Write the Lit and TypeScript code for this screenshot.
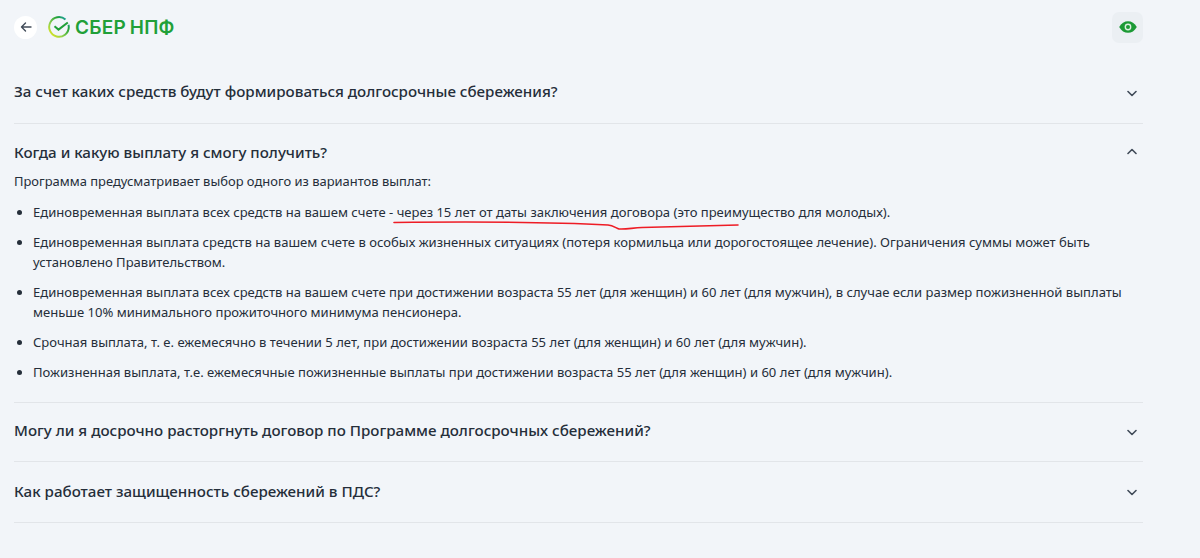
import { LitElement, html, css, svg } from "lit"
import { customElement } from "lit/decorators.js"

const questions = {
  first: "За счет каких средств будут формироваться долгосрочные сбережения?",
  open: "Когда и какую выплату я смогу получить?",
  third: "Могу ли я досрочно расторгнуть договор по Программе долгосрочных сбережений?",
  fourth: "Как работает защищенность сбережений в ПДС?",
}

const chevron = (up: boolean) => html`
  <svg class="chevron" width="10" height="7" viewBox="0 0 10 7">
    <path d=${up ? "M1 5.500 5 1.500l4 4" : "M1 1.500l4 4 4-4"} fill="none" stroke="#414b58" stroke-width="1.600" stroke-linecap="round" stroke-linejoin="round"></path>
  </svg>
`

@customElement("app-root")
export class AppRoot extends LitElement {
  static styles = css`
    :host {
      display: block;
      height: 558px;
      overflow: hidden;
      position: relative;
      background: #f2f5f9;
      color: #252e3a;
      font-family: "Noto Sans", sans-serif;
    }
    .page {
      width: 1129px;
      margin-left: 14px;
    }
    .top {
      display: flex;
      align-items: center;
      height: 54px;
    }
    .back {
      width: 23px;
      height: 23px;
      border-radius: 50%;
      background: #fff;
      display: flex;
      align-items: center;
      justify-content: center;
      margin-right: 11px;
    }
    .brand {
      display: flex;
      align-items: center;
      gap: 5px;
      color: #21a038;
      font-family: "Inter", sans-serif;
      font-size: 19px;
      font-weight: 600;
      letter-spacing: 0.2px;
      word-spacing: -1px;
    }
    .eye {
      margin-left: auto;
      width: 31px;
      height: 31px;
      border-radius: 7px;
      background: #ebeff3;
      display: flex;
      align-items: center;
      justify-content: center;
    }
    .item {
      border-bottom: 1px solid #e2e5e9;
    }
    .head {
      box-sizing: border-box;
      display: flex;
      align-items: center;
      justify-content: space-between;
      height: 59px;
      padding-right: 6px;
      font-size: 15.15px;
      font-weight: 500;
    }
    .item.first .head {
      height: 69px;
      padding-top: 4px;
    }
    .item.first .chevron {
      margin-top: 5px;
    }
    .item.open .head {
      padding-bottom: 4px;
    }
    .item.third .head {
      height: 58px;
      padding-bottom: 4px;
    }
    .item.third .chevron {
      margin-top: 4px;
    }
    .item.fourth .head {
      height: 60px;
      padding-bottom: 3px;
    }
    .item.fourth .chevron {
      margin-top: 3px;
    }
    .body {
      font-size: 12.95px;
      line-height: 20px;
      margin-top: -12px;
      padding-bottom: 10px;
    }
    ul {
      margin: 11px 0 0;
      padding: 0 0 0 19px;
      font-size: 13.05px;
    }
    li {
      margin-bottom: 10px;
    }
    .mark {
      position: absolute;
      left: 380px;
      top: 210px;
      pointer-events: none;
    }
  `

  render() {
    return html`
      <div class="page">
        <div class="top">
          <div class="back">
            <svg width="12" height="12" viewBox="0 0 12 12">
              <path d="M11 6H1.500M5.500 2 1.500 6l4 4" fill="none" stroke="#414b58" stroke-width="1.400" stroke-linecap="round" stroke-linejoin="round"></path>
            </svg>
          </div>
          <div class="brand">
            <svg width="22" height="22" viewBox="0 0 22 22">
              <defs>
                <linearGradient id="ring" x1="0" y1="1" x2="1" y2="0">
                  <stop offset="0" stop-color="#f2e913"></stop>
                  <stop offset="0.35" stop-color="#8fd14f"></stop>
                  <stop offset="0.7" stop-color="#21a038"></stop>
                  <stop offset="1" stop-color="#1fa2d8"></stop>
                </linearGradient>
              </defs>
              <path d="M17.500 3.600A9.800 9.800 0 1 0 20.800 11c0-.8-.1-1.500-.3-2.200" fill="none" stroke="url(#ring)" stroke-width="2"></path>
              <path d="M6.500 10.300l4 3.300 9.300-7.100" fill="none" stroke="#21a038" stroke-width="2"></path>
            </svg>
            <span>СБЕР НПФ</span>
          </div>
          <div class="eye">
            <svg width="18" height="12" viewBox="0 0 18 12">
              <path d="M0.200 6C2.300 2 5.500 0.200 9 0.200S15.700 2 17.800 6C15.700 10 12.500 11.800 9 11.800S2.300 10 0.200 6Z" fill="#1c9a35"></path>
              <circle cx="9" cy="6" r="3.400" fill="#dcefe0"></circle>
              <circle cx="9" cy="6" r="2" fill="#1c9a35"></circle>
            </svg>
          </div>
        </div>

        <section class="item first">
          <div class="head"><span>${questions.first}</span>${chevron(false)}</div>
        </section>

        <section class="item open">
          <div class="head"><span>${questions.open}</span>${chevron(true)}</div>
          <div class="body">
            Программа предусматривает выбор одного из вариантов выплат:
            <ul>
              <li>Единовременная выплата всех средств на вашем счете - через 15 лет от даты заключения договора (это преимущество для молодых).</li>
              <li>Единовременная выплата средств на вашем счете в особых жизненных ситуациях (потеря кормильца или дорогостоящее лечение). Ограничения суммы может быть установлено Правительством.</li>
              <li>Единовременная выплата всех средств на вашем счете при достижении возраста 55 лет (для женщин) и 60 лет (для мужчин), в случае если размер пожизненной выплаты меньше 10% минимального прожиточного минимума пенсионера.</li>
              <li>Срочная выплата, т. е. ежемесячно в течении 5 лет, при достижении возраста 55 лет (для женщин) и 60 лет (для мужчин).</li>
              <li>Пожизненная выплата, т.е. ежемесячные пожизненные выплаты при достижении возраста 55 лет (для женщин) и 60 лет (для мужчин).</li>
            </ul>
          </div>
        </section>

        <section class="item third">
          <div class="head"><span>${questions.third}</span>${chevron(false)}</div>
        </section>
        <section class="item fourth">
          <div class="head"><span>${questions.fourth}</span>${chevron(false)}</div>
        </section>
      </div>

      <svg class="mark" width="360" height="22" viewBox="0 0 360 22">
        ${svg`<path d="M14 12.500 C100 11.500 180 12.500 228 15 C233 15.500 236 18 239 19 C246 19.500 252 18 262 17.500 L358 15" fill="none" stroke="#ee1c25" stroke-width="1.600" stroke-linecap="round"></path>`}
      </svg>
    `
  }
}
